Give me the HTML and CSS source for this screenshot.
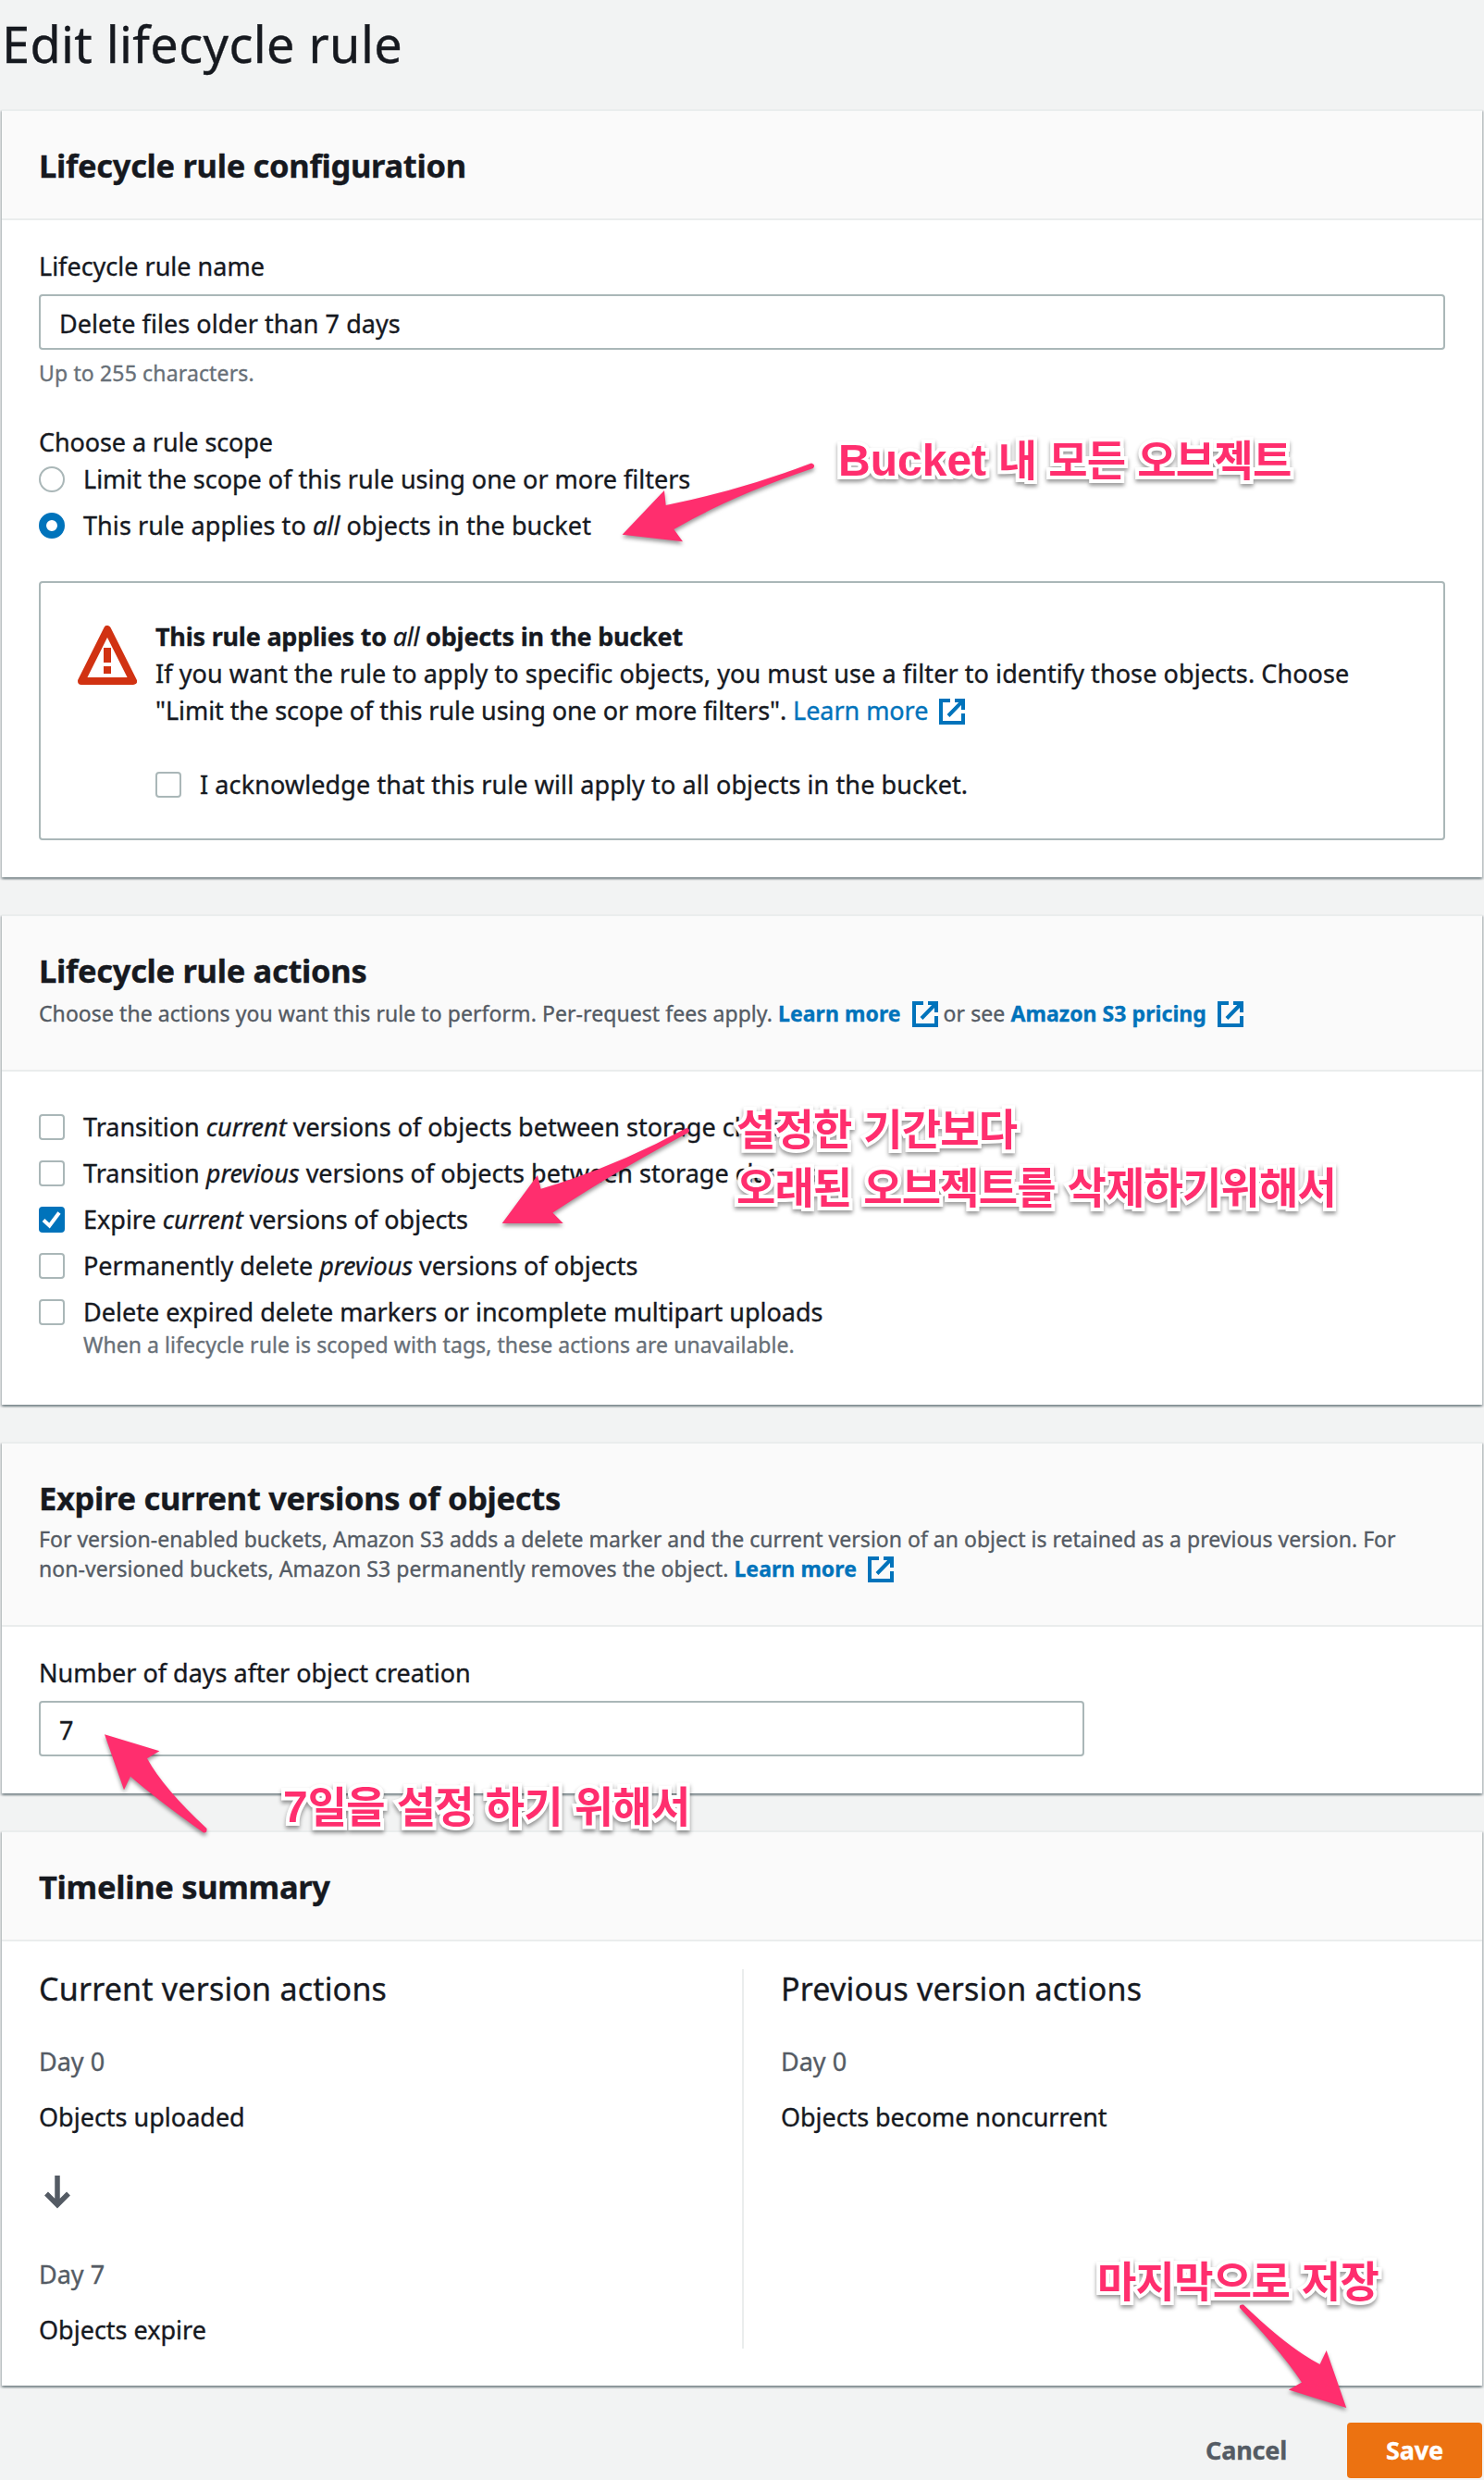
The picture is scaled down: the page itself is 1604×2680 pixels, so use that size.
FILE: index.html
```html
<!DOCTYPE html>
<html lang="en">
<head>
<meta charset="utf-8">
<title>Edit lifecycle rule</title>
<link rel="stylesheet" href="styles.css">
</head>
<body>
<svg class="defs" aria-hidden="true">
  <symbol id="external" viewBox="0 0 28 28">
    <path d="M12 2H2V26H26V16M17 2H26V12M26 2L10 18.5" fill="none" stroke="currentColor" stroke-width="4"/>
  </symbol>
</svg>
<main class="page">
  <h1 class="page-title">Edit lifecycle rule</h1>

  <section class="panel">
    <header class="panel-header"><h2 class="panel-title">Lifecycle rule configuration</h2></header>
    <div class="panel-body">
      <label class="label" for="name">Lifecycle rule name</label>
      <input class="input" id="name" value="Delete files older than 7 days">
      <p class="hint">Up to 255 characters.</p>
      <p class="label scope-label">Choose a rule scope</p>
      <div class="options">
        <div class="option"><span class="radio"></span><span class="text">Limit the scope of this rule using one or more filters</span></div>
        <div class="option"><span class="radio checked"></span><span class="text wide">This rule applies to <em>all</em> objects in the bucket</span></div>
      </div>
      <div class="alert">
        <svg class="alert-icon" viewBox="0 0 64 64">
          <path d="M32 4L60 60H4Z" fill="none" stroke="#d13212" stroke-width="8" stroke-linejoin="round"/>
          <path d="M28 24H36V40H28ZM28 44H36V52H28Z" fill="#d13212"/>
        </svg>
        <div class="alert-content">
          <p class="alert-title">This rule applies to <em>all</em> objects in the bucket</p>
          <p><span class="wide">If you want the rule to apply to specific objects, you must use a filter to identify those objects. Choose</span><br><span class="narrow">"Limit the scope of this rule using one or more filters". <a class="link">Learn more<svg class="ext"><use href="#external"/></svg></a></span></p>
          <div class="option acknowledge"><span class="checkbox"></span><span class="wide">I acknowledge that this rule will apply to all objects in the bucket.</span></div>
        </div>
      </div>
    </div>
  </section>

  <section class="panel">
    <header class="panel-header described">
      <h2 class="panel-title">Lifecycle rule actions</h2>
      <p class="description single">Choose the actions you want this rule to perform. Per-request fees apply. <a class="link">Learn more<svg class="ext"><use href="#external"/></svg></a> or see <a class="link">Amazon S3 pricing<svg class="ext"><use href="#external"/></svg></a></p>
    </header>
    <div class="panel-body actions">
      <div class="options">
        <div class="option"><span class="checkbox"></span><span class="text">Transition <em>current</em> versions of objects between storage classes</span></div>
        <div class="option"><span class="checkbox"></span><span class="text">Transition <em>previous</em> versions of objects between storage classes</span></div>
        <div class="option"><span class="checkbox checked"><svg viewBox="0 0 28 28"><path d="M5 14.5L11.5 20.5L22 6.5" fill="none" stroke="#fff" stroke-width="4"/></svg></span><span class="text">Expire <em>current</em> versions of objects</span></div>
        <div class="option"><span class="checkbox"></span><span class="text">Permanently delete <em>previous</em> versions of objects</span></div>
        <div class="option"><span class="checkbox"></span><div class="text">Delete expired delete markers or incomplete multipart uploads<p class="sub">When a lifecycle rule is scoped with tags, these actions are unavailable.</p></div></div>
      </div>
    </div>
  </section>

  <section class="panel">
    <header class="panel-header described">
      <h2 class="panel-title">Expire current versions of objects</h2>
      <p class="description"><span class="lead">For version-enabled buckets, Amazon S3 adds a delete marker and the current version of an object is retained as a previous version. For</span><br>non-versioned buckets, Amazon S3 permanently removes the object. <a class="link">Learn more<svg class="ext"><use href="#external"/></svg></a></p>
    </header>
    <div class="panel-body">
      <label class="label" for="days">Number of days after object creation</label>
      <input class="input days" id="days" value="7">
    </div>
  </section>

  <section class="panel">
    <header class="panel-header"><h2 class="panel-title">Timeline summary</h2></header>
    <div class="panel-body timeline">
      <div class="column">
        <h3 class="column-title">Current version actions</h3>
        <p class="day">Day 0</p>
        <p class="event">Objects uploaded</p>
        <svg class="down" viewBox="0 0 28 36"><path d="M14 0V30M2 19.5L14 31.5L26 19.5" fill="none" stroke="#545b64" stroke-width="5.5"/></svg>
        <p class="day next">Day 7</p>
        <p class="event">Objects expire</p>
      </div>
      <div class="column">
        <h3 class="column-title">Previous version actions</h3>
        <p class="day">Day 0</p>
        <p class="event narrow">Objects become noncurrent</p>
      </div>
    </div>
  </section>

  <footer class="footer">
    <button class="button">Cancel</button>
    <button class="button primary">Save</button>
  </footer>

  <svg class="arrows" viewBox="0 0 1604 2680">
    <g fill="#ff2e6e">
      <path d="M672.6 577.7L718 530L719.7 546Q800 530 877 500.5Q882 502 879 506Q790 536 728.4 572L738 585.3Z"/>
      <path d="M542.7 1322L581 1270L584.6 1284.8Q665 1261 742 1219Q747 1220 744 1224Q660 1269 597.4 1310.6L608.7 1322Z"/>
      <path d="M113 1874.3L172.4 1892.3L159 1900.3Q177 1933 223.5 1976Q224 1981 220 1980.5Q170 1945 141 1919.7L134 1934.3Z"/>
      <path d="M1455.2 2602L1392.8 2582.4L1407 2574.6Q1388 2545 1340 2494Q1339 2490 1344 2490.5Q1392 2537 1426.6 2555L1433.7 2540Z"/>
    </g>
  </svg>
  <p class="note note-bucket"><span class="latin">Bucket</span> 내 모든 오브젝트</p>
  <p class="note note-expire">설정한 기간보다<br>오래된 오브젝트를 삭제하기위해서</p>
  <p class="note note-days"><span class="latin">7</span>일을 설정 하기 위해서</p>
  <p class="note note-save">마지막으로 저장</p>
</main>
</body>
</html>
```
FILE: styles.css
```css
* { box-sizing: border-box; margin: 0; padding: 0; }

body {
  background: #f2f3f3;
  color: #16191f;
  font: 27px/40px "Noto Sans", "Open Sans", sans-serif;
  -webkit-text-stroke: .35px currentColor;
}

.defs { position: absolute; width: 0; height: 0; }

.page { position: relative; width: 1604px; height: 2680px; padding: 11px 2px 0; overflow: hidden; }
.page-title { font-size: 54px; line-height: 72px; font-weight: 400; letter-spacing: .4px; margin-bottom: 35px; }

.panel {
  background: #fff;
  border-top: 2px solid #eaeded;
  margin-bottom: 40px;
  box-shadow: 0 2px 2px rgba(0, 28, 36, .3), 2px 2px 2px rgba(0, 28, 36, .15), -2px 2px 2px rgba(0, 28, 36, .15);
}
.panel-header { background: #fafafa; border-bottom: 2px solid #eaeded; padding: 37px 40px 35px; }
.panel-header.described { padding-bottom: 45px; }
.panel-title { font-size: 34.5px; line-height: 44px; font-weight: 700; letter-spacing: -.32px; }
.panel-body { padding: 30px 40px 40px; }
.description { font-size: 23px; line-height: 32px; color: #545b64; letter-spacing: .07px; margin-top: 6px; white-space: nowrap; }
.description .lead { letter-spacing: .02px; }
.description.single { margin-top: 8px; }
.description .link { font-weight: 700; letter-spacing: .06px; }

.label { display: block; }
.input {
  display: block;
  width: 100%;
  height: 60px;
  margin-top: 10px;
  padding: 2px 20px 0;
  border: 2px solid #aab7b8;
  border-radius: 4px;
  background: #fff;
  color: inherit;
  font: inherit;
  letter-spacing: .06px;
}
.input.days { width: 1130px; }
.hint { font-size: 23px; line-height: 32px; color: #687078; letter-spacing: .15px; margin-top: 9px; }
.scope-label { margin: 39px 0 -1px; letter-spacing: -.1px; }

.wide { letter-spacing: .08px; }
.narrow { letter-spacing: -.06px; }

.options { display: flex; flex-direction: column; gap: 10px; }
.option { display: flex; gap: 20px; white-space: nowrap; }
.option .text { margin: 1px 0 -1px; }
.radio, .checkbox { flex: none; width: 28px; height: 28px; margin-top: 7px; border: 2px solid #aab7b8; background: #fff; }
.radio { border-radius: 50%; }
.radio.checked { border: 8px solid #0073bb; }
.checkbox { border-radius: 4px; }
.checkbox.checked { border: 0; background: #0073bb; }
.checkbox svg { display: block; width: 28px; height: 28px; }
.sub { font-size: 23px; line-height: 32px; color: #687078; letter-spacing: .06px; margin-top: -1px; }
.actions { padding: 39px 40px 50px; }

.alert {
  display: flex;
  gap: 20px;
  margin-top: 41px;
  padding: 38px 40px;
  border: 2px solid #aab7b8;
  border-radius: 4px;
}
.alert-icon { flex: none; width: 64px; height: 64px; margin-top: 8px; }
.alert-content { white-space: nowrap; }
.alert-title { font-weight: 700; letter-spacing: -.22px; }
.alert-title em { font-weight: 400; }
.acknowledge { margin-top: 40px; }
.acknowledge .checkbox { margin-top: 6px; }
.acknowledge .wide { letter-spacing: .1px; }

.link { color: #0073bb; }
.ext { width: 28px; height: 28px; margin: -6px 0 0 12px; vertical-align: -6px; }
.alert .ext { vertical-align: -5px; }

.timeline { display: grid; grid-template-columns: 760px 1fr; }
.column { height: 410px; }
.column + .column { border-left: 2px solid #eaeded; padding-left: 40px; }
.column-title { font-size: 34px; line-height: 40px; font-weight: 400; letter-spacing: .2px; padding-top: 1px; margin-bottom: 39px; }
.day { color: #545b64; }
.event { margin-top: 20px; }
.down { display: block; width: 28px; height: 36px; margin: 43px 0 0 6px; }
.day.next { margin-top: 51px; }

.footer { display: flex; justify-content: flex-end; }
.button { height: 60px; padding: 0 42px; border: 0; border-radius: 4px; background: none; color: #545b64; font: 700 27px/60px "Noto Sans", sans-serif; letter-spacing: -.2px; }
.button.primary { width: 146px; margin-left: 23px; background: #ec7211; color: #fff; }

.arrows { position: absolute; left: 0; top: 0; width: 1604px; height: 2680px; pointer-events: none; filter: drop-shadow(0 3px 2px rgba(0, 0, 0, .4)); }
.note {
  position: absolute;
  color: #ff2e6e;
  font: 700 46px/63px "Noto Sans CJK KR", sans-serif;
  letter-spacing: -.7px;
  word-spacing: 3px;
  white-space: nowrap;
  -webkit-text-stroke: 8px #fff;
  paint-order: stroke fill;
  filter: drop-shadow(0 3px 2px rgba(0, 0, 0, .4));
}
.latin { font-family: "Liberation Sans", sans-serif; font-size: 48px; letter-spacing: 0; }
.note-bucket { left: 906px; top: 463px; }
.note-expire { left: 796px; top: 1186px; letter-spacing: -.8px; }
.note-days { left: 306px; top: 1918px; }
.note-save { left: 1186px; top: 2431px; }
```
